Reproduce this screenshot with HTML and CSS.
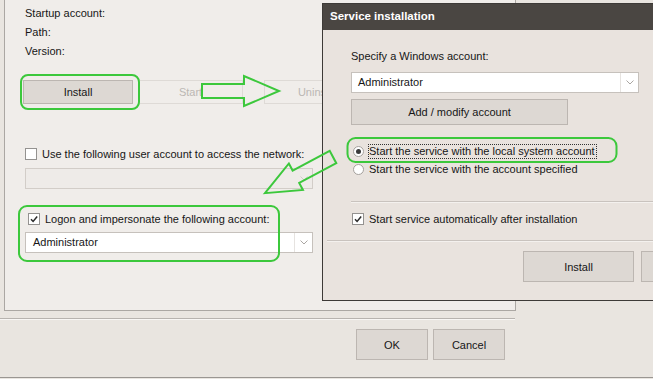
FILE: index.html
```html
<!DOCTYPE html>
<html lang="en">
<head>
    <meta charset="UTF-8">
    <title>Service installation</title>
    <link rel="stylesheet" href="styles.css">
</head>
<body>
    <div class="window">
        <div class="panel">
            <div class="info">
                <div>Startup account:</div>
                <div>Path:</div>
                <div>Version:</div>
            </div>

            <div class="actions">
                <button class="btn btn-install">Install</button>
                <button class="btn btn-start" disabled>Start</button>
                <button class="btn btn-uninstall" disabled>Uninstall</button>
            </div>

            <div class="check-row net-row">
                <span class="checkbox"></span>
                Use the following user account to access the network:
            </div>
            <div class="combo combo-net disabled">
                <span class="combo-value"></span>
                <span class="combo-arrow">
                    <svg width="8" height="5" viewBox="0 0 8 5"><path d="M0.5 0.5L4 4L7.5 0.5"/></svg>
                </span>
            </div>

            <div class="check-row logon-row">
                <span class="checkbox">
                    <svg viewBox="0 0 10 10"><path d="M2 5.2L4.1 7.4L8.2 2.6"/></svg>
                </span>
                Logon and impersonate the following account:
            </div>
            <div class="combo combo-logon">
                <span class="combo-value">Administrator</span>
                <span class="combo-arrow">
                    <svg width="8" height="5" viewBox="0 0 8 5"><path d="M0.5 0.5L4 4L7.5 0.5"/></svg>
                </span>
            </div>
        </div>

        <div class="separator"></div>

        <div class="footer">
            <button class="btn btn-footer">OK</button>
            <button class="btn btn-footer">Cancel</button>
        </div>
    </div>

    <div class="dialog">
        <div class="dialog-title">Service installation</div>
        <div class="dialog-body">
            <div class="dialog-label">Specify a Windows account:</div>
            <div class="combo combo-account">
                <span class="combo-value">Administrator</span>
                <span class="combo-arrow">
                    <svg width="8" height="5" viewBox="0 0 8 5"><path d="M0.5 0.5L4 4L7.5 0.5"/></svg>
                </span>
            </div>
            <button class="btn btn-add">Add / modify account</button>

            <div class="radio-group">
                <div class="radio-row">
                    <span class="radio checked"></span>
                    <span class="radio-label focus">Start the service with the local system account</span>
                </div>
                <div class="radio-row">
                    <span class="radio"></span>
                    <span class="radio-label">Start the service with the account specified</span>
                </div>
            </div>

            <div class="dialog-sep"></div>

            <div class="check-row auto-row">
                <span class="checkbox">
                    <svg viewBox="0 0 10 10"><path d="M2 5.2L4.1 7.4L8.2 2.6"/></svg>
                </span>
                Start service automatically after installation
            </div>

            <div class="dialog-sep wide"></div>

            <div class="dialog-footer">
                <button class="btn btn-dialog">Install</button>
                <!-- second button runs off the screen, only its edge shows -->
                <button class="btn btn-dialog"></button>
            </div>
        </div>
    </div>

    <!-- green markup drawn over the screenshot -->
    <svg class="annotations" width="653" height="379" viewBox="0 0 653 379">
        <rect x="21" y="75" width="118" height="34" rx="7"/>
        <rect x="19" y="206" width="260" height="55" rx="8"/>
        <rect x="347.5" y="138" width="269" height="24" rx="8"/>
        <polygon points="202,84 244,84 244,76 279,91 244,106 244,98 202,98"/>
        <polygon points="0,-7 42,-7 42,-15 77,0 42,15 42,7 0,7" transform="translate(333 157) rotate(152)"/>
    </svg>
</body>
</html>
```

FILE: styles.css
```css
* {
    margin: 0;
    padding: 0;
    box-sizing: border-box;
}

html,
body {
    width: 653px;
    height: 379px;
    overflow: hidden;
}

body {
    position: relative;
    font-family: "Liberation Sans", Arial, sans-serif;
    font-size: 11px;
    color: #161616;
    background: #e9e5e0;
}

/* main window */

.window {
    height: 378px;
    border-bottom: 1px solid #9a9692;
    display: flex;
    flex-direction: column;
}

.panel {
    margin-left: 4px;
    width: 512px;
    height: 311px;
    border: 1px solid #aba7a3;
    border-top: none;
    background: #f0edea;
    padding: 4px 0 0 20px;
}

.info div {
    line-height: 19px;
}

.actions {
    display: flex;
    margin: 19px 0 0 -2px;
}

.btn {
    font: inherit;
    color: #161616;
    background: #ddd8d3;
    border: 1px solid #bcb6b1;
    height: 24px;
    cursor: pointer;
}

.btn:disabled {
    background: transparent;
    border-color: #dedad6;
    color: #bbb7b3;
}

.btn-install {
    width: 110px;
}

.btn-start {
    width: 105px;
    margin-left: 5px;
}

.btn-uninstall {
    width: 110px;
    margin-left: 21px;
}

.check-row {
    display: flex;
    align-items: center;
    height: 16px;
}

.checkbox {
    width: 12px;
    height: 12px;
    border: 1px solid #949290;
    background: #fff;
    margin-right: 5px;
    display: flex;
}

.checkbox svg {
    width: 10px;
    height: 10px;
    fill: none;
    stroke: #2b2b2b;
    stroke-width: 1.5;
}

.net-row {
    margin-top: 42px;
}

.logon-row {
    margin-top: 22px;
    padding-left: 3px;
}

.combo {
    display: flex;
    width: 288px;
    height: 21px;
    border: 1px solid #c6c1bc;
    background: #fff;
}

.combo-value {
    flex: 1;
    padding-left: 7px;
    line-height: 18px;
}

.combo-arrow {
    width: 18px;
    border-left: 1px solid #e6e3e0;
    display: flex;
    align-items: center;
    justify-content: center;
}

.combo-arrow svg {
    fill: none;
    stroke: #aaa6a2;
    stroke-width: 1;
}

.combo.disabled {
    background: #eeebe8;
    border-color: #d2cdc8;
}

.combo.disabled .combo-arrow {
    border-left-color: transparent;
}

.combo.disabled .combo-arrow svg {
    stroke: #cfcbc7;
}

.combo-net {
    margin-top: 6px;
}

.combo-logon {
    margin-top: 5px;
}

.separator {
    margin-top: 7px;
    width: 515px;
    height: 2px;
    border-top: 1px solid #b7b3af;
    border-bottom: 1px solid #f8f6f4;
}

.footer {
    display: flex;
    justify-content: flex-end;
    gap: 5px;
    width: 515px;
    padding: 9px 10px 0 0;
}

.btn-footer {
    width: 72px;
    height: 31px;
}

/* service installation dialog */

.dialog {
    position: absolute;
    left: 322px;
    top: 3px;
    width: 440px;
    height: 298px;
    border: 1px solid #3d3a37;
    background: #e9e3de;
    z-index: 2;
}

.dialog-title {
    height: 26px;
    line-height: 25px;
    background: #4a4642;
    color: #fff;
    font-weight: bold;
    font-size: 11.5px;
    padding-left: 7px;
}

.dialog-body {
    padding: 18px 0 0 28px;
}

.dialog-label {
    line-height: 16px;
}

.combo-account {
    margin-top: 8px;
}

.combo-account .combo-value {
    padding-left: 6px;
}

.btn-add {
    display: block;
    margin-top: 6px;
    width: 217px;
    height: 26px;
}

.radio-group {
    margin-top: 18px;
}

.radio-row {
    display: flex;
    align-items: center;
    height: 16px;
    padding-left: 2px;
}

.radio-row + .radio-row {
    margin-top: 2px;
}

.radio {
    position: relative;
    width: 11px;
    height: 11px;
    border-radius: 50%;
    border: 1px solid #a5a19d;
    background: #fff;
    margin-right: 4px;
}

.radio.checked::after {
    content: "";
    position: absolute;
    left: 2px;
    top: 2px;
    width: 5px;
    height: 5px;
    border-radius: 50%;
    background: #3a3a3a;
}

.radio-label {
    border: 1px dotted transparent;
    padding-right: 1px;
    line-height: 13px;
}

.radio-label.focus {
    border-color: #333;
}

.dialog-sep {
    margin-top: 24px;
    height: 2px;
    border-top: 1px solid #c9c3be;
    border-bottom: 1px solid #f4f1ee;
}

.auto-row {
    margin-top: 8px;
    padding-left: 1px;
}

.dialog-sep.wide {
    margin: 13px 0 0 -24px;
}

.dialog-footer {
    display: flex;
    gap: 7px;
    margin: 9px 0 0 172px;
}

.btn-dialog {
    flex: none;
    width: 111px;
    height: 31px;
}

/* annotations */

.annotations {
    position: absolute;
    left: 0;
    top: 0;
    z-index: 5;
    pointer-events: none;
    fill: none;
    stroke: #3cc83c;
    stroke-width: 2;
}
```
